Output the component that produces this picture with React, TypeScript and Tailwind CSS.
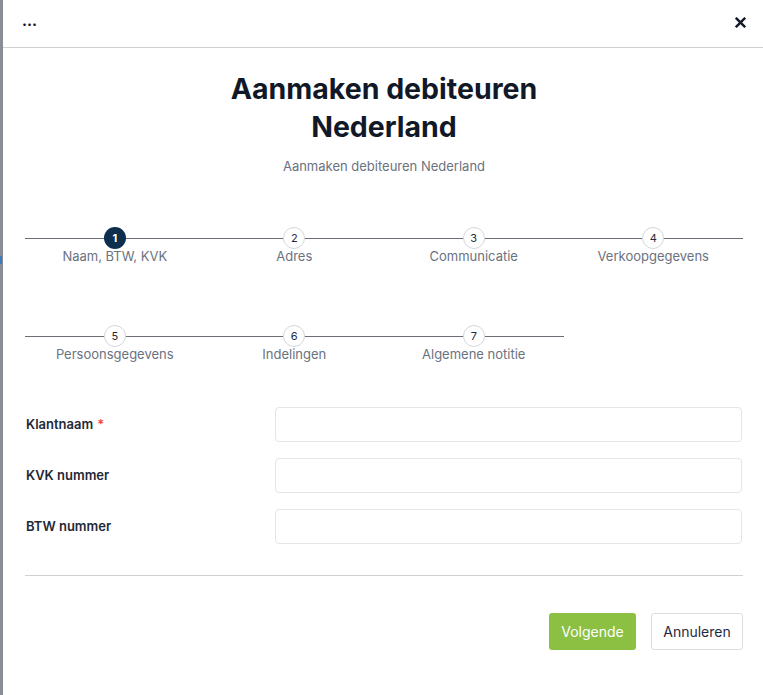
import React from "react";

const steps1 = [
  { n: 1, label: "Naam, BTW, KVK", active: true },
  { n: 2, label: "Adres" },
  { n: 3, label: "Communicatie" },
  { n: 4, label: "Verkoopgegevens" },
];
const steps2 = [
  { n: 5, label: "Persoonsgegevens" },
  { n: 6, label: "Indelingen" },
  { n: 7, label: "Algemene notitie" },
];

function Step({ n, label, active }: { n: number; label: string; active?: boolean }) {
  return (
    <div className="relative flex flex-col items-center">
      <div className="absolute left-0 right-0 top-[11px] h-px bg-[#6b6e75]" />
      <div
        className={
          active
            ? "relative z-10 flex h-[22px] w-[22px] items-center justify-center rounded-full bg-[#0d2e4c] text-[11px] font-bold text-white"
            : "relative z-10 flex h-[22px] w-[22px] items-center justify-center rounded-full border border-[#d4d6db] bg-white text-[11px] text-[#1f2937]"
        }
      >
        {n}
      </div>
      <div className="-mt-[2px] text-[13px] leading-[18px] text-[#6b7280]">{label}</div>
    </div>
  );
}

export default function App() {
  return (
    <div className="flex h-[695px] w-[763px] overflow-hidden bg-white" style={{ fontFamily: "Inter, 'Noto Sans', sans-serif" }}>
      <div className="relative w-[3px] shrink-0 bg-[#8a8d94]">
        <div className="absolute left-0 top-[256px] h-[8px] w-[2px] bg-[#3b7bbf]" />
      </div>
      <div className="flex flex-1 flex-col">
        <div className="flex h-[48px] items-center justify-between border-b border-[#cfd1d4] pl-[19px] pr-[17px]">
          <span className="-mt-[4px] text-[15px] font-bold text-[#111827]">...</span>
          <svg width="11" height="11" viewBox="0 0 10 10" className="-mt-[2px]">
            <path d="M1.5 1.5 L8.5 8.5 M8.5 1.5 L1.5 8.5" stroke="#111827" strokeWidth="2.2" strokeLinecap="square" />
          </svg>
        </div>
        <div className="flex flex-col pl-[22px] pr-[20px]">
          <h1 className="mt-[22px] text-center text-[28.5px] font-bold leading-[38px] text-[#111827]">
            Aanmaken debiteuren
            <br />
            Nederland
          </h1>
          <p className="mt-[11px] text-center text-[13px] leading-[18px] text-[#6b7280]">Aanmaken debiteuren Nederland</p>

          <div className="mt-[52px] grid grid-cols-4">
            {steps1.map((s) => (
              <Step key={s.n} {...s} />
            ))}
          </div>
          <div className="mt-[60px] grid grid-cols-4">
            {steps2.map((s) => (
              <Step key={s.n} {...s} />
            ))}
          </div>

          <div className="mt-[44px] flex flex-col gap-[16px]">
            {[
              { label: "Klantnaam", req: true },
              { label: "KVK nummer" },
              { label: "BTW nummer" },
            ].map((f) => (
              <div key={f.label} className="flex items-center">
                <label className="w-[250px] pl-[1px] text-[13px] font-semibold text-[#1f2937]">
                  {f.label}
                  {f.req && <span className="ml-[4px] text-[#ef4444]">*</span>}
                </label>
                <input className="mr-[1px] h-[35px] flex-1 rounded-[4px] border border-[#e3e5e8] bg-white outline-none" />
              </div>
            ))}
          </div>

          <div className="mt-[31px] h-px bg-[#cfd1d4]" />

          <div className="mt-[37px] flex justify-end gap-[15px]">
            <button className="h-[37px] w-[87px] rounded-[3px] bg-[#8bc043] text-[14px] text-white">Volgende</button>
            <button className="h-[37px] w-[92px] rounded-[3px] border border-[#dcdee2] bg-white text-[14px] text-[#1f2a44]">Annuleren</button>
          </div>
        </div>
      </div>
    </div>
  );
}
